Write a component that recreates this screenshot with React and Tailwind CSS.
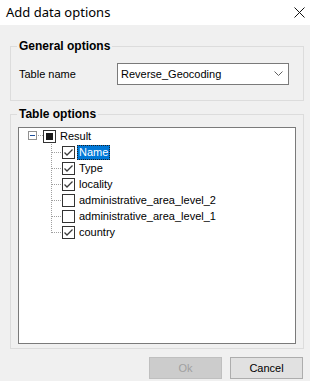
import React from "react";

function Check({ checked = true, indeterminate = false }) {
  return (
    <svg width="13" height="13" viewBox="0 0 13 13" className="shrink-0">
      <rect x="0.5" y="0.5" width="12" height="12" fill="#ffffff" stroke="#333333" />
      {checked && !indeterminate && (
        <path d="M2.5 6.5 L5 9 L10.5 3.5" fill="none" stroke="#3c3c3c" strokeWidth="1.3" />
      )}
      {indeterminate && <rect x="3" y="3" width="7" height="7" fill="#1a1a1a" />}
    </svg>
  );
}

function Connector({ last = false }) {
  return (
    <svg width="11" height="16" viewBox="0 0 11 16" className="shrink-0">
      <line x1="0.5" y1="0" x2="0.5" y2={last ? 9 : 16} stroke="#a0a0a0" strokeDasharray="1 1" />
      <line x1="1" y1="8.5" x2="11" y2="8.5" stroke="#a0a0a0" strokeDasharray="1 1" />
    </svg>
  );
}

function ChildRow({ label, checked, selected, last }) {
  return (
    <div className="flex h-[16px] items-center pl-[32px]">
      <Connector last={last} />
      <Check checked={checked} />
      <span
        className={
          selected
            ? "ml-[2px] flex h-[15px] items-center border border-dotted border-[#202020] bg-[#0078d7] px-[1px] text-white"
            : "ml-[2px] flex h-[15px] items-center px-[2px] text-black"
        }
      >
        {label}
      </span>
    </div>
  );
}

export default function App() {
  const items = [
    { label: "Name", checked: true, selected: true },
    { label: "Type", checked: true },
    { label: "locality", checked: true },
    { label: "administrative_area_level_2", checked: false },
    { label: "administrative_area_level_1", checked: false },
    { label: "country", checked: true, last: true },
  ];
  return (
    <div
      className="flex h-[381px] w-[310px] flex-col overflow-hidden bg-[#f0f0f0] text-[11px] text-black"
      style={{ fontFamily: '"Liberation Sans", Arial, sans-serif' }}
    >
      <div className="flex h-[25px] shrink-0 items-center justify-between bg-white pl-[6px] pr-[5px]">
        <span
          className="text-[13px] text-[#000]"
          style={{ fontFamily: '"Noto Sans", "Open Sans", sans-serif' }}
        >
          Add data options
        </span>
        <svg width="11" height="11" viewBox="0 0 11 11">
          <path d="M0.5 0.5 L10.5 10.5 M10.5 0.5 L0.5 10.5" stroke="#111" strokeWidth="1" />
        </svg>
      </div>

      <div className="flex flex-col pl-[10px] pr-[6px]">
        <fieldset className="mt-[14px] border border-[#dcdcdc] p-0">
          <legend className="ml-[6px] px-[2px] text-[12px] font-bold leading-[14px]">General options</legend>
          <div className="mt-[10px] flex items-center pb-[15px] pl-[8px]">
            <span className="w-[98px]">Table name</span>
            <div className="flex h-[22px] w-[172px] items-center justify-between border border-[#7a7a7a] bg-white pl-[3px] pr-[5px]">
              <span>Reverse_Geocoding</span>
              <svg width="9" height="6" viewBox="0 0 9 6">
                <path d="M0.5 0.5 L4.5 4.5 L8.5 0.5" fill="none" stroke="#606060" />
              </svg>
            </div>
          </div>
        </fieldset>

        <fieldset className="mt-[6px] border border-[#dcdcdc] p-0">
          <legend className="ml-[6px] px-[2px] text-[12px] font-bold leading-[14px]">Table options</legend>
          <div className="mx-[7px] mb-[4px] mt-[6px] h-[217px] border border-[#7a7a7a] bg-white">
            <div className="flex h-[16px] items-center pl-[9px]">
              <svg width="15" height="16" viewBox="0 0 15 16" className="shrink-0">
                <rect x="0.5" y="3.5" width="8" height="8" fill="#fff" stroke="#919191" />
                <line x1="2" y1="7.5" x2="7" y2="7.5" stroke="#1c4f9c" />
                <line x1="10" y1="7.5" x2="15" y2="7.5" stroke="#a0a0a0" strokeDasharray="1 1" />
              </svg>
              <Check indeterminate />
              <span className="ml-[4px]">Result</span>
            </div>
            {items.map((it) => (
              <ChildRow key={it.label} {...it} />
            ))}
          </div>
        </fieldset>
      </div>

      <div className="mt-[8px] flex justify-end gap-[8px] pr-[7px]">
        <div className="flex h-[22px] w-[73px] items-center justify-center border border-[#bfbfbf] bg-[#cccccc] text-[#a0a0a0]">
          Ok
        </div>
        <div className="flex h-[22px] w-[73px] items-center justify-center border border-[#adadad] bg-[#e1e1e1]">
          Cancel
        </div>
      </div>
    </div>
  );
}
